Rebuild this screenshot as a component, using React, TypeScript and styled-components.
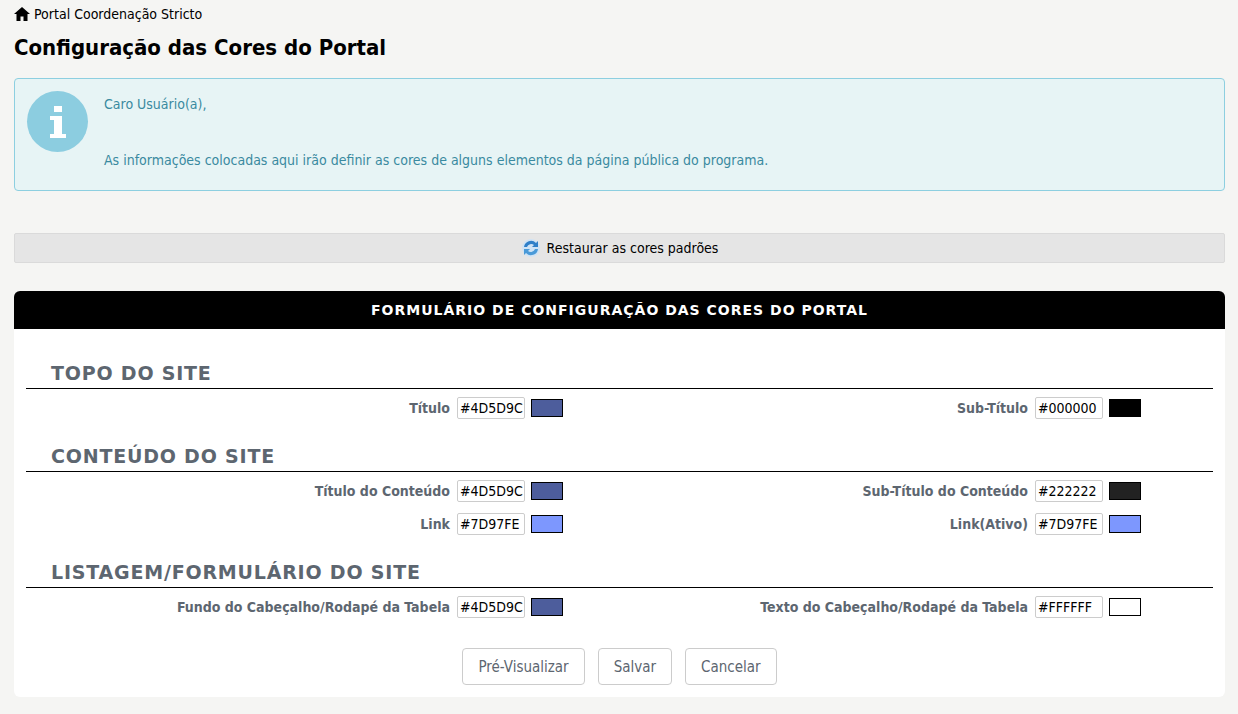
import React from "react";
import styled, { createGlobalStyle } from "styled-components";

const Global = createGlobalStyle`
  body { margin: 0; background: #f5f5f3; font-family: "DejaVu Sans Condensed", "Noto Sans", sans-serif; font-size: 14px; color: #000; }
`;
const Page = styled.div` padding: 4px 13px 18px 14px; `;
const Crumb = styled.div` display: flex; align-items: center; gap: 4px; height: 20px; font-size: 14px; `;
const Title = styled.h1` margin: 10px 0 0; font-size: 22px; font-weight: bold; height: 34px; line-height: 28px; `;
const Info = styled.div`
  margin-top: 10px; background: #e7f4f5; border: 1px solid #8dcfe0; border-radius: 4px;
  height: 113px; box-sizing: border-box; display: flex; padding: 12px 0 0 12px; gap: 16px; color: #3a8aa0;
`;
const Circle = styled.div` width: 61px; height: 61px; border-radius: 50%; background: #8ccde0; flex: none; display:flex; align-items:center; justify-content:center; `;
const InfoText = styled.div` padding-top: 3px; line-height: 20px; p { margin: 0 0 36px; } `;
const Restore = styled.div`
  margin-top: 42px; height: 30px; box-sizing: border-box; background: #e5e5e5; border: 1px solid #dadada; border-radius: 2px;
  display: flex; align-items: center; justify-content: center; gap: 6px;
`;
const Panel = styled.div` margin-top: 28px; background: #fff; border-radius: 6px; overflow: hidden; padding-bottom: 12px; `;
const PanelHead = styled.div`
  background: #000; color: #fff; height: 38px; display: flex; align-items: center; justify-content: center;
  font-family: "DejaVu Sans", sans-serif; font-weight: bold; font-size: 14px; letter-spacing: 1px;
`;
const Body = styled.div` padding: 33px 12px 0; `;
const Section = styled.div<{ $first?: boolean }>`
  color: #5d6670; font-weight: bold; font-size: 19px; letter-spacing: 0.8px; font-family: "DejaVu Sans", sans-serif;
  padding: 0 0 4px 25px; border-bottom: 1px solid #000; line-height: 22px; margin-top: ${p => p.$first ? "0" : "26px"};
`;
const Grid = styled.div` display: grid; grid-template-columns: 424px 110px 454px auto; column-gap: 7px; row-gap: 11px; padding-top: 8px; `;
const Label = styled.div` text-align: right; color: #5d6670; font-weight: bold; align-self: center; `;
const Field = styled.div` display: flex; align-items: center; gap: 6px; `;
const Input = styled.div` width: 68px; height: 22px; box-sizing: border-box; border: 1px solid #ccc; border-radius: 2px; padding: 0 2px; line-height: 20px; font-size: 14px; `;
const Swatch = styled.div<{ $c: string }>` width: 32px; height: 18px; box-sizing: border-box; border: 1px solid #000; background: ${p => p.$c}; `;
const Buttons = styled.div` display: flex; justify-content: center; gap: 13px; margin-top: 30px; `;
const Btn = styled.div`
  height: 37px; box-sizing: border-box; padding: 0 15px; border: 1px solid #ccc; border-radius: 4px; color: #5d6670;
  display: flex; align-items: center; font-size: 15px;
`;

const F = ({ v }: { v: string }) => (<Field><Input>{v}</Input><Swatch $c={v} /></Field>);

export default function App() {
  return (<>
    <Global />
    <Page>
      <Crumb>
        <svg width="16" height="14" viewBox="0 0 16 14"><path d="M8 0 L16 7 H13.5 V14 H9.5 V9.5 H6.5 V14 H2.5 V7 H0 Z" fill="#000" /></svg>
        Portal Coordenação Stricto
      </Crumb>
      <Title>Configuração das Cores do Portal</Title>
      <Info>
        <Circle>
          <svg width="20" height="32" viewBox="0 0 20 32"><rect x="6" y="0" width="8" height="6" fill="#fff" /><path d="M2 10 H14 V28 H18 V32 H2 V28 H6 V14 H2 Z" fill="#fff" /></svg>
        </Circle>
        <InfoText>
          <p>Caro Usuário(a),</p>
          <div>As informações colocadas aqui irão definir as cores de alguns elementos da página pública do programa.</div>
        </InfoText>
      </Info>
      <Restore>
        <svg width="20" height="20" viewBox="0 0 20 20">
          <circle cx="10" cy="10" r="9" fill="#cfe3f5" />
          <path d="M3 9 A7 7 0 0 1 15 5 L17 3 V9 H11 L13 7 A4.5 4.5 0 0 0 6 9 Z" fill="#2f7fc8" />
          <path d="M17 11 A7 7 0 0 1 5 15 L3 17 V11 H9 L7 13 A4.5 4.5 0 0 0 14 11 Z" fill="#4a9ad8" />
        </svg>
        Restaurar as cores padrões
      </Restore>
      <Panel>
        <PanelHead>FORMULÁRIO DE CONFIGURAÇÃO DAS CORES DO PORTAL</PanelHead>
        <Body>
          <Section $first>TOPO DO SITE</Section>
          <Grid>
            <Label>Título</Label><F v="#4D5D9C" />
            <Label>Sub-Título</Label><F v="#000000" />
          </Grid>
          <Section>CONTEÚDO DO SITE</Section>
          <Grid>
            <Label>Título do Conteúdo</Label><F v="#4D5D9C" />
            <Label>Sub-Título do Conteúdo</Label><F v="#222222" />
            <Label>Link</Label><F v="#7D97FE" />
            <Label>Link(Ativo)</Label><F v="#7D97FE" />
          </Grid>
          <Section>LISTAGEM/FORMULÁRIO DO SITE</Section>
          <Grid>
            <Label>Fundo do Cabeçalho/Rodapé da Tabela</Label><F v="#4D5D9C" />
            <Label>Texto do Cabeçalho/Rodapé da Tabela</Label><F v="#FFFFFF" />
          </Grid>
          <Buttons><Btn>Pré-Visualizar</Btn><Btn>Salvar</Btn><Btn>Cancelar</Btn></Buttons>
        </Body>
      </Panel>
    </Page>
  </>);
}
